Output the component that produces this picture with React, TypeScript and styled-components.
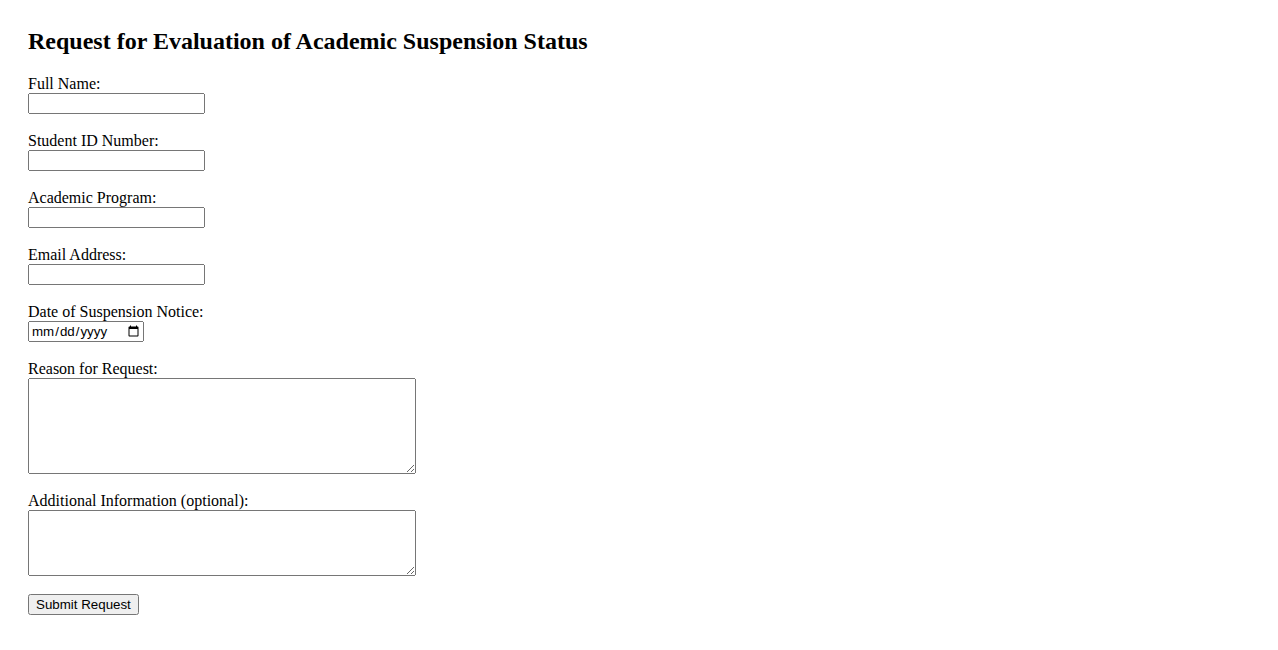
import styled, { createGlobalStyle } from "styled-components";

const GlobalStyle = createGlobalStyle`
  body {
    margin: 0;
    background: #ffffff;
    color: #000000;
    font-family: "Liberation Serif", "Times New Roman", serif;
    font-size: 16px;
  }
`;

const Page = styled.div`
  padding: 28px;
`;

const Title = styled.h2`
  margin: 0 0 21px;
  font-size: 24px;
  line-height: 26px;
  font-weight: bold;
`;

const Form = styled.form`
  display: flex;
  flex-direction: column;
  align-items: flex-start;
`;

const Field = styled.div`
  display: flex;
  flex-direction: column;
  align-items: flex-start;
  margin-bottom: 18px;
`;

const Label = styled.label`
  display: block;
  line-height: 18px;
`;

const controlFont = `
  font-family: "Liberation Sans", Arial, sans-serif;
  font-size: 13.333px;
`;

const TextInput = styled.input`
  ${controlFont}
  display: block;
  box-sizing: border-box;
  width: 177px;
  height: 21px;
  margin: 0;
`;

const DateInput = styled.input`
  ${controlFont}
  display: block;
  box-sizing: border-box;
  width: 116px;
  height: 21px;
  margin: 0;
`;

const TextArea = styled.textarea<{ $height: number }>`
  ${controlFont}
  display: block;
  box-sizing: border-box;
  width: 388px;
  height: ${(props) => props.$height}px;
  margin: 0;
`;

const SubmitButton = styled.button`
  ${controlFont}
  box-sizing: border-box;
  height: 21px;
  margin: 0;
`;

const textFields = [
  { id: "fullName", label: "Full Name:", type: "text" },
  { id: "studentId", label: "Student ID Number:", type: "text" },
  { id: "program", label: "Academic Program:", type: "text" },
  { id: "email", label: "Email Address:", type: "email" },
];

const App = () => {
  return (
    <Page>
      <GlobalStyle />
      <Title>Request for Evaluation of Academic Suspension Status</Title>
      <Form onSubmit={(e) => e.preventDefault()}>
        {textFields.map((f) => (
          <Field key={f.id}>
            <Label htmlFor={f.id}>{f.label}</Label>
            <TextInput id={f.id} type={f.type} />
          </Field>
        ))}
        <Field>
          <Label htmlFor="noticeDate">Date of Suspension Notice:</Label>
          <DateInput id="noticeDate" type="date" />
        </Field>
        <Field>
          <Label htmlFor="reason">Reason for Request:</Label>
          <TextArea id="reason" $height={96} />
        </Field>
        <Field>
          <Label htmlFor="additional">Additional Information (optional):</Label>
          <TextArea id="additional" $height={66} />
        </Field>
        <SubmitButton type="submit">Submit Request</SubmitButton>
      </Form>
    </Page>
  );
};

export default App;
